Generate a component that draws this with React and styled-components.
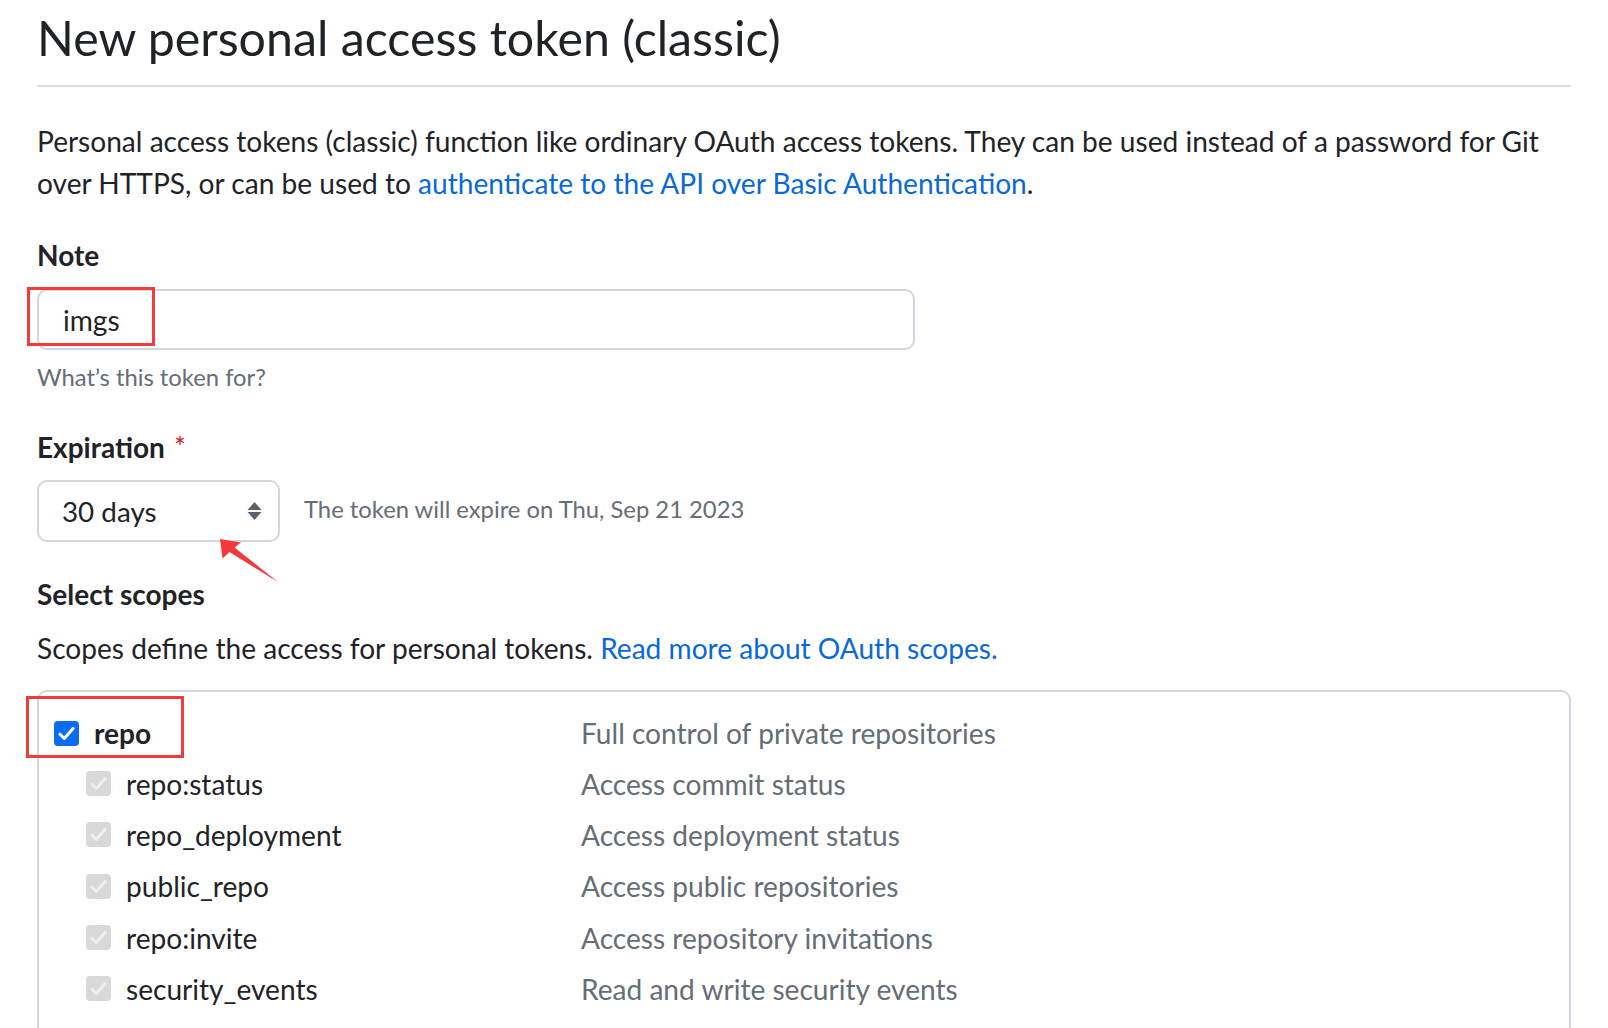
import React from 'react'
import styled, { createGlobalStyle } from 'styled-components'

const GlobalStyle = createGlobalStyle`
  html, body {
    margin: 0;
    padding: 0;
    background: #ffffff;
  }
  body {
    font-family: Lato, "Noto Sans", "Liberation Sans", sans-serif;
    color: #1f2328;
    overflow: hidden;
  }
`

const Page = styled.div`
  padding: 0 37px;
  width: 1534px;
`

const Subhead = styled.div`
  padding-top: 7px;
  padding-bottom: 18px;
  border-bottom: 2px solid #d8dee4;
`

const Title = styled.h1`
  margin: 0;
  font-size: 48.3px;
  line-height: 60px;
  font-weight: 400;
`

const Text = styled.p`
  margin: ${p => p.$mt || 0}px 0 0;
  font-size: 28.1px;
  line-height: 42px;
  white-space: nowrap;
`

const Link = styled.a`
  color: #0969da;
  text-decoration: none;
`

const Label = styled.div`
  margin-top: ${p => p.$mt}px;
  font-size: 28px;
  line-height: 42px;
  font-weight: 700;
`

const Required = styled.span`
  color: #cf222e;
  font-weight: 400;
  margin-left: 9px;
`

const Annotated = styled.div`
  position: relative;
  display: ${p => (p.$inline ? 'inline-flex' : 'flex')};
`

const RedBox = styled.div`
  position: absolute;
  left: ${p => p.$l}px;
  top: ${p => p.$t}px;
  width: ${p => p.$w}px;
  height: ${p => p.$h}px;
  border: 3px solid #f23b3b;
  box-sizing: border-box;
  pointer-events: none;
`

const Input = styled.div`
  margin-top: 13px;
  width: 878px;
  height: 61px;
  box-sizing: border-box;
  border: 2px solid #d0d7de;
  border-radius: 10px;
  padding: 0 24px;
  display: flex;
  align-items: center;
  font-size: 28.1px;
`

const Hint = styled.div`
  margin-top: 9px;
  font-size: 23.8px;
  line-height: 36px;
  color: #656d76;
`

const ExpireRow = styled.div`
  margin-top: 12px;
  display: flex;
  align-items: center;
  gap: 24px;
`

const Select = styled.div`
  position: relative;
  width: 243px;
  height: 62px;
  box-sizing: border-box;
  border: 2px solid #d0d7de;
  border-radius: 10px;
  padding: 0 16px 0 23px;
  display: flex;
  align-items: center;
  justify-content: space-between;
  font-size: 27.8px;
`

const Arrow = styled.svg`
  position: absolute;
  left: 178px;
  top: 54px;
  overflow: visible;
`

const Note = styled.span`
  font-size: 23.8px;
  color: #656d76;
  margin-bottom: 4px;
`

const ScopesBox = styled.div`
  margin-top: 21px;
  border: 2px solid #d0d7de;
  border-bottom: none;
  border-radius: 10px 10px 0 0;
  padding: 16px 15px 0;
  height: 400px;
`

const Row = styled.div`
  display: grid;
  grid-template-columns: 527px 1fr;
  align-items: center;
  height: ${p => (p.$first ? 50 : 51.3)}px;
`

const Name = styled.div`
  display: flex;
  align-items: center;
  gap: 15px;
  padding-left: ${p => (p.$child ? 32 : 0)}px;
  font-size: 28.1px;
  font-weight: ${p => (p.$child ? 400 : 700)};
`

const Box = styled.span`
  width: 25px;
  height: 25px;
  border-radius: 4px;
  background: ${p => (p.$on ? '#0b6cf0' : '#d9d9d9')};
  display: inline-flex;
  align-items: center;
  justify-content: center;
  flex: none;
`

const Desc = styled.div`
  font-size: 28.1px;
  color: #656d76;
`

const Check = ({ on }) => (
  <Box $on={on}>
    <svg width="17" height="15" viewBox="0 0 17 15">
      <path
        d="M2 8.2 L6.3 12.5 L15 2.5"
        fill="none"
        stroke={on ? '#ffffff' : '#efefef'}
        strokeWidth="3"
        strokeLinecap="round"
        strokeLinejoin="round"
      />
    </svg>
  </Box>
)

const children = [
  ['repo:status', 'Access commit status'],
  ['repo_deployment', 'Access deployment status'],
  ['public_repo', 'Access public repositories'],
  ['repo:invite', 'Access repository invitations'],
  ['security_events', 'Read and write security events'],
]

export default function App() {
  return (
    <Page>
      <GlobalStyle />
      <Subhead>
        <Title>New personal access token (classic)</Title>
      </Subhead>

      <Text $mt={33}>
        Personal access tokens (classic) function like ordinary OAuth access tokens. They can be used instead of a password for Git
        <br />
        over HTTPS, or can be used to <Link>authenticate to the API over Basic Authentication</Link>.
      </Text>

      <Label $mt={30}>Note</Label>
      <Annotated>
        <Input>imgs</Input>
        <RedBox $l={-10} $t={11} $w={128} $h={59} />
      </Annotated>
      <Hint>What’s this token for?</Hint>

      <Label $mt={31}>
        Expiration<Required>*</Required>
      </Label>
      <ExpireRow>
        <Annotated $inline>
          <Select>
            30 days
            <svg width="15" height="20" viewBox="0 0 15 20">
              <path d="M7.5 1 L14.5 9 L0.5 9 Z" fill="#59636e" />
              <path d="M0.5 11 L14.5 11 L7.5 19 Z" fill="#59636e" />
            </svg>
          </Select>
          <Arrow width="70" height="52" viewBox="0 0 70 52">
            <polygon points="5,5 26,8.5 19.5,13.5 63,48 14.5,18 7.5,24.5" fill="#f23a3a" />
          </Arrow>
        </Annotated>
        <Note>The token will expire on Thu, Sep 21 2023</Note>
      </ExpireRow>

      <Label $mt={31}>Select scopes</Label>
      <Text $mt={12}>
        Scopes define the access for personal tokens. <Link>Read more about OAuth scopes.</Link>
      </Text>

      <ScopesBox>
        <Row $first>
          <Annotated $inline>
            <Name>
              <Check on />
              repo
            </Name>
            <RedBox $l={-28.5} $t={-20} $w={158} $h={62} />
          </Annotated>
          <Desc>Full control of private repositories</Desc>
        </Row>
        {children.map(([name, desc]) => (
          <Row key={name}>
            <Name $child>
              <Check />
              {name}
            </Name>
            <Desc>{desc}</Desc>
          </Row>
        ))}
      </ScopesBox>
    </Page>
  )
}
